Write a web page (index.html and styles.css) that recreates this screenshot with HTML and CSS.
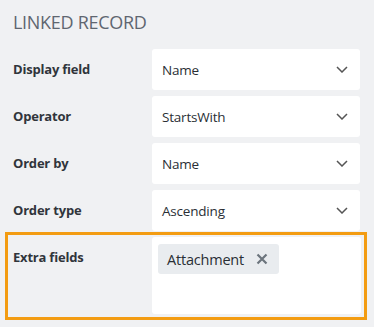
FILE: index.html
```html
<!DOCTYPE html>
<html>
<head>
<meta charset="utf-8">
<link rel="stylesheet" href="styles.css">
</head>
<body>
<div class="panel">
  <h2 class="title">LINKED RECORD</h2>
  <div class="rows">
    <div class="row">
      <div class="label">Display field</div>
      <div class="select"><span>Name</span><svg class="chev" width="12" height="7" viewBox="0 0 12 7"><path d="M1 1l5 5 5-5" fill="none" stroke="#555" stroke-width="1.5"/></svg></div>
    </div>
    <div class="row">
      <div class="label">Operator</div>
      <div class="select"><span>StartsWith</span><svg class="chev" width="12" height="7" viewBox="0 0 12 7"><path d="M1 1l5 5 5-5" fill="none" stroke="#555" stroke-width="1.5"/></svg></div>
    </div>
    <div class="row">
      <div class="label">Order by</div>
      <div class="select"><span>Name</span><svg class="chev" width="12" height="7" viewBox="0 0 12 7"><path d="M1 1l5 5 5-5" fill="none" stroke="#555" stroke-width="1.5"/></svg></div>
    </div>
    <div class="row">
      <div class="label">Order type</div>
      <div class="select"><span>Ascending</span><svg class="chev" width="12" height="7" viewBox="0 0 12 7"><path d="M1 1l5 5 5-5" fill="none" stroke="#555" stroke-width="1.5"/></svg></div>
    </div>
    <div class="row highlight">
      <div class="label">Extra fields</div>
      <div class="multi">
        <span class="tag">Attachment<svg class="x" width="12" height="12" viewBox="0 0 12 12"><path d="M1.5 1.5l9 9M10.5 1.5l-9 9" stroke="#6c757d" stroke-width="2.2"/></svg></span>
      </div>
    </div>
  </div>
</div>
</body>
</html>
```
FILE: styles.css
```css
html, body {
  margin: 0;
  padding: 0;
  background: #f0f1f3;
}
body {
  font-family: "Open Sans", "Noto Sans", sans-serif;
  width: 374px;
  height: 327px;
  overflow: hidden;
}
.panel {
  padding: 10px 10px 0 8px;
}
.title {
  margin: 0 0 0 5px;
  height: 37px;
  font-size: 18px;
  line-height: 24px;
  font-weight: 400;
  color: #5f6670;
  letter-spacing: -0.3px;
}
.rows {
  display: flex;
  flex-direction: column;
  gap: 1px;
}
.row {
  display: flex;
  align-items: flex-start;
  padding: 2px 4px 3px 0;
}
.label {
  width: 139px;
  padding-left: 5px;
  flex: none;
  line-height: 41px;
  font-size: 13px;
  font-weight: 700;
  color: #30353b;
  letter-spacing: -0.2px;
}
.select {
  flex: 1;
  height: 41px;
  background: #fff;
  border-radius: 3px;
  display: flex;
  align-items: center;
  justify-content: space-between;
  padding: 0 12px 0 10px;
  box-sizing: border-box;
  font-size: 13.5px;
  color: #2a2f35;
  letter-spacing: -0.2px;
}
.chev {
  display: block;
}
.highlight {
  outline: 3px solid #f39c12;
  padding-right: 3px;
}
.multi {
  flex: 1;
  height: 77px;
  background: #fff;
  border-radius: 3px;
  padding: 7px 6px;
  box-sizing: border-box;
}
.tag {
  display: inline-flex;
  align-items: center;
  height: 30px;
  padding: 0 11px 0 9px;
  background: #e9ecef;
  border-radius: 3px;
  font-size: 14.5px;
  color: #2a2f35;
  letter-spacing: -0.2px;
  gap: 12px;
}
.x {
  display: block;
}
```
